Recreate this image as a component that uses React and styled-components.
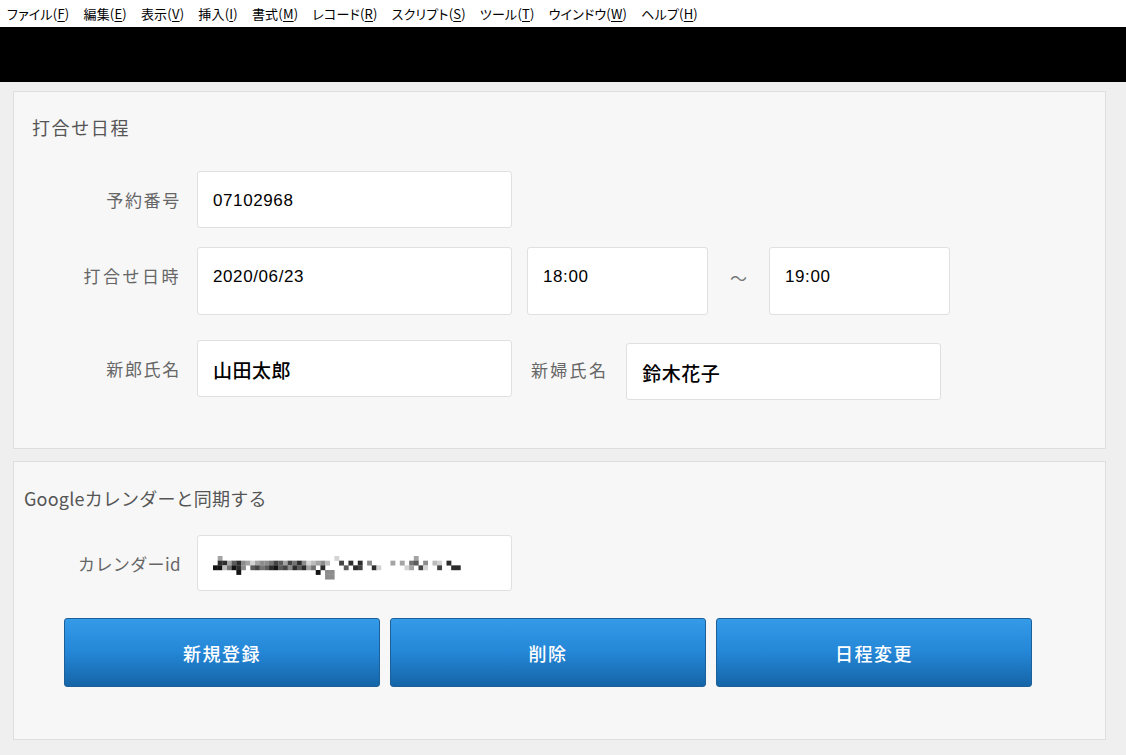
import React from 'react';
import styled, { createGlobalStyle } from 'styled-components';

const GlobalStyle = createGlobalStyle`
  body {
    margin: 0;
    background: #efefef;
    font-family: "Liberation Sans", "Noto Sans CJK JP", sans-serif;
  }
`;

const menus = [
  ['ファイル', 'F'],
  ['編集', 'E'],
  ['表示', 'V'],
  ['挿入', 'I'],
  ['書式', 'M'],
  ['レコード', 'R'],
  ['スクリプト', 'S'],
  ['ツール', 'T'],
  ['ウインドウ', 'W'],
  ['ヘルプ', 'H'],
];

// pixelated (blurred) calendar id: one string per row, 0 = black ... 9 = near white
const mosaicRows = [
  '.6........................8................6........',
  '.116315686554236241587657..2.1.1.5....6.6.43.5.78.1.',
  '0074015.32431032513164.1....3.12..18.....86.28..2..11',
  '.....0................0.55...........................',
  '........................55...........................',
];

const CELL = 4.67;

const Mosaic = () => (
  <svg width="252" height="24" viewBox="0 0 252 24">
    {mosaicRows.flatMap((row, r) =>
      row.split('').map((ch, c) => {
        if (ch === '.') return null;
        const v = Math.round(20 + Number(ch) * 24);
        return (
          <rect
            key={`${r}-${c}`}
            x={c * CELL}
            y={r * CELL}
            width={CELL + 0.2}
            height={CELL + 0.2}
            fill={`rgb(${v},${v},${v})`}
          />
        );
      })
    )}
  </svg>
);

const App = () => (
  <>
    <GlobalStyle />
    <MenuBar>
      {menus.map(([name, key]) => (
        <MenuItem key={key}>
          {name}(<u>{key}</u>)
        </MenuItem>
      ))}
    </MenuBar>
    <Banner />
    <Main>
      <Panel $h={358}>
        <Title $pl={18} $pt={23} $ls={1.6}>打合せ日程</Title>
        <Row $mt={32}>
          <Label>予約番号</Label>
          <Field $w={315}>07102968</Field>
        </Row>
        <Row $mt={19}>
          <Label $ls={2.5}>打合せ日時</Label>
          <Field $w={315} $h={68}>2020/06/23</Field>
          <Field $w={181} $h={68} $ml={15}>18:00</Field>
          <Tilde>～</Tilde>
          <Field $w={181} $h={68}>19:00</Field>
        </Row>
        <Row $mt={25}>
          <Label>新郎氏名</Label>
          <Field $w={315} $name>山田太郎</Field>
          <SubLabel $ls={2.3}>新婦氏名</SubLabel>
          <Field $w={315} $name $mt={3}>鈴木花子</Field>
        </Row>
      </Panel>
      <Panel $h={279}>
        <Title $pl={10} $pt={24} $ls={0.2}>Googleカレンダーと同期する</Title>
        <Row $mt={25}>
          <Label $ls={0.4}>カレンダーid</Label>
          <Field $w={315} $h={56}>
            <Mosaic />
          </Field>
        </Row>
        <Buttons>
          <Button>新規登録</Button>
          <Button>削除</Button>
          <Button>日程変更</Button>
        </Buttons>
      </Panel>
    </Main>
  </>
);

export default App;

const MenuBar = styled.div`
  display: flex;
  align-items: center;
  height: 27px;
  padding-left: 7px;
  gap: 14px;
  background: #fff;
  font-family: "Noto Sans CJK JP", sans-serif;
  font-size: 13px;
  font-feature-settings: "palt" 1;
  letter-spacing: 0.2px;
  color: #000;
`;

const MenuItem = styled.span`
  white-space: nowrap;

  u {
    text-decoration: underline;
    text-underline-offset: 2px;
  }
`;

const Banner = styled.div`
  height: 55px;
  background: #000;
`;

const Main = styled.main`
  display: flex;
  flex-direction: column;
  gap: 12px;
  padding: 9px 20px 0 13px;
`;

const Panel = styled.section`
  box-sizing: border-box;
  height: ${(p) => p.$h}px;
  background: #f7f7f7;
  border: 1px solid #dedede;
`;

const Title = styled.h2`
  margin: 0;
  padding: ${(p) => p.$pt}px 0 0 ${(p) => p.$pl}px;
  font-family: "Noto Sans CJK JP", sans-serif;
  font-size: 18px;
  font-weight: 400;
  line-height: 24px;
  letter-spacing: ${(p) => p.$ls}px;
  color: #555;
`;

const Row = styled.div`
  display: flex;
  align-items: flex-start;
  margin-top: ${(p) => p.$mt}px;
  padding-left: 47px;
`;

const Label = styled.div`
  width: 120px;
  margin-right: 16px;
  padding-top: 17px;
  text-align: right;
  font-family: "Noto Sans CJK JP", sans-serif;
  font-size: 17px;
  line-height: 24px;
  letter-spacing: ${(p) => p.$ls ?? 1.7}px;
  color: #666;
  white-space: nowrap;
`;

const SubLabel = styled(Label)`
  width: auto;
  margin: 0 18px 0 19px;
  padding-top: 18px;
`;

const Field = styled.div`
  box-sizing: border-box;
  width: ${(p) => p.$w}px;
  height: ${(p) => p.$h || 57}px;
  margin-left: ${(p) => p.$ml || 0}px;
  margin-top: ${(p) => p.$mt || 0}px;
  padding: 17px 15px 0;
  background: #fff;
  border: 1px solid #e0e0e0;
  border-radius: 3px;
  font-family: ${(p) => (p.$name ? '"Noto Sans CJK JP"' : '"Liberation Sans", "Noto Sans CJK JP"')}, sans-serif;
  font-size: ${(p) => (p.$name ? 19 : 17)}px;
  font-weight: ${(p) => (p.$name ? 500 : 400)};
  letter-spacing: ${(p) => (p.$name ? 0.5 : 0.6)}px;
  line-height: 24px;
  color: #000;

  svg {
    display: block;
    margin-top: 3px;
  }
`;

const Tilde = styled.div`
  width: 61px;
  padding-top: 19px;
  text-align: center;
  font-family: "Noto Sans CJK JP", sans-serif;
  font-size: 17px;
  line-height: 24px;
  color: #777;
`;

const Buttons = styled.div`
  display: flex;
  gap: 10px;
  margin-top: 27px;
  padding-left: 50px;
`;

const Button = styled.button`
  box-sizing: border-box;
  width: 316px;
  height: 69px;
  border: 1px solid #1d5f99;
  border-radius: 3px;
  background: linear-gradient(to bottom, #349be9 0%, #2486d6 50%, #1565a7 100%);
  color: #fff;
  font-family: "Noto Sans CJK JP", sans-serif;
  font-size: 18px;
  font-weight: 500;
  letter-spacing: 1.5px;
  cursor: pointer;
`;
